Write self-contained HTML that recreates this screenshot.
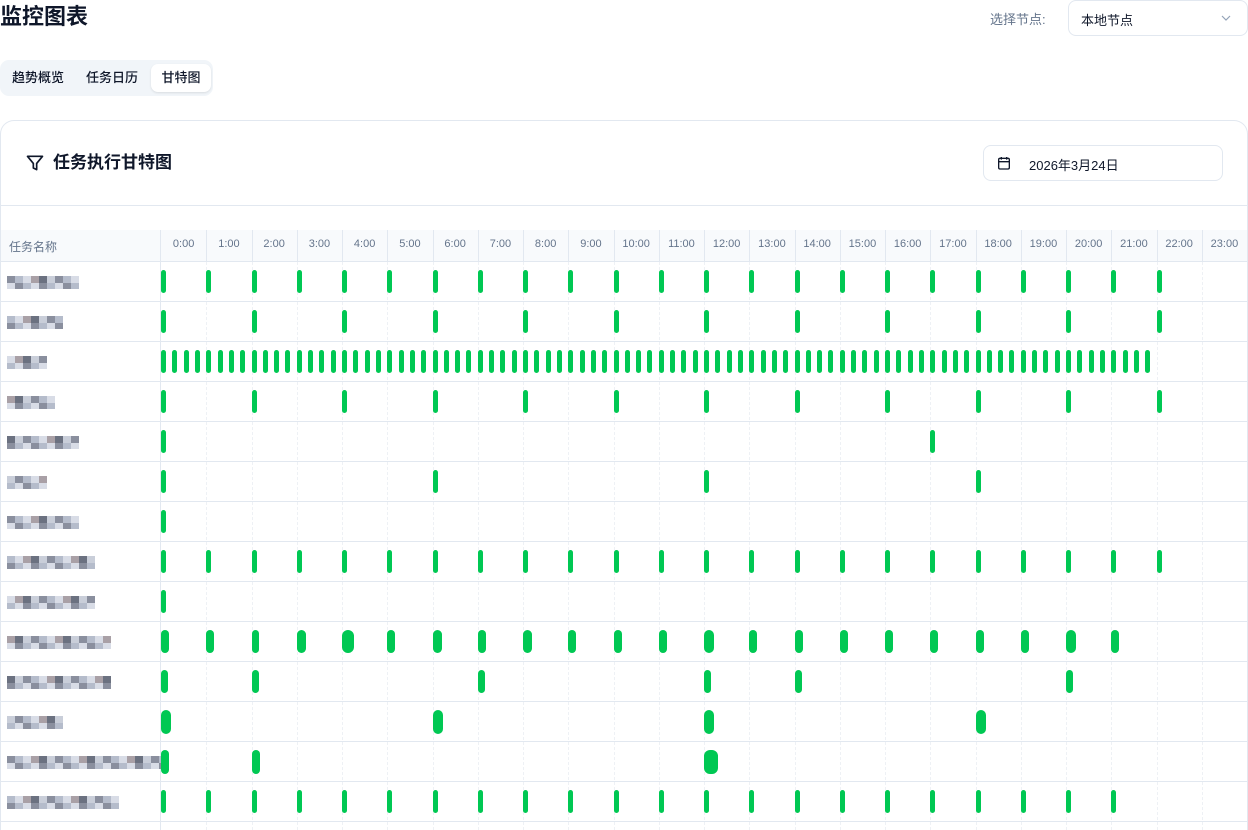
<!DOCTYPE html>
<html style="height:830px;overflow:hidden"><head><meta charset="utf-8">
<style>
*{box-sizing:border-box;margin:0;padding:0}
body{width:1248px;height:830px;overflow:hidden;background:#fff;font-family:"Liberation Sans","Noto Sans CJK SC",sans-serif;color:#0f172a;position:relative}
.abs{position:absolute}
h1{position:absolute;left:0;top:2px;font-size:22px;font-weight:700;line-height:30px}
.lbl{left:990px;top:9px;font-size:13px;color:#64748b}
.sel{left:1068px;top:0;width:180px;height:36px;border:1px solid #e2e8f0;border-radius:8px;font-size:13px;padding:9px 12px}
.tabs{left:0;top:60px;width:213px;height:36px;background:#f1f5f9;border-radius:9px}
.tab{position:absolute;top:4px;height:28px;line-height:28px;font-size:13px;color:#0f172a;font-weight:500}
.tab.on{background:#fff;border-radius:7px;box-shadow:0 1px 2px rgba(0,0,0,.1)}
.card{left:0;top:120px;width:1248px;height:710px;border:1px solid #e2e8f0;border-bottom:none;border-radius:14px 14px 0 0}
.date{left:983px;top:145px;width:240px;height:36px;border:1px solid #e2e8f0;border-radius:8px;font-size:13px}
</style></head><body>
<h1>监控图表</h1>
<div class="abs lbl">选择节点:</div>
<div class="abs sel">本地节点<svg class="abs" style="left:152px;top:13px" width="10" height="8" viewBox="0 0 10 8"><path d="M1 2l4 4 4-4" fill="none" stroke="#94a3b8" stroke-width="1.2"/></svg></div>
<div class="abs tabs">
<div class="tab" style="left:12px">趋势概览</div>
<div class="tab" style="left:86px">任务日历</div>
<div class="tab on" style="left:151px;width:60px;text-align:center">甘特图</div>
</div>
<div class="abs card"></div>
<svg class="abs" style="left:25px;top:153px" width="20" height="20" viewBox="0 0 24 24"><path d="M3 4h18l-7 8.5V20l-4-2v-5.5z" fill="none" stroke="#0f172a" stroke-width="2" stroke-linejoin="round"/></svg>
<div class="abs" style="left:53px;top:151px;font-size:17px;font-weight:700;line-height:24px">任务执行甘特图</div>
<div class="abs date"><svg class="abs" style="left:12px;top:9px" width="16" height="16" viewBox="0 0 24 24"><rect x="4" y="5" width="16" height="16" rx="2" fill="none" stroke="#0f172a" stroke-width="2"/><path d="M4 10h16M8 3v4M16 3v4" stroke="#0f172a" stroke-width="2"/></svg><span class="abs" style="left:45px;top:9px">2026年3月24日</span></div>
<div class="abs" style="left:1px;top:205px;width:1246px;height:1px;background:#e2e8f0"></div>
<div id="g"></div>
<script>
var g=document.getElementById('g'),h='';
var L=161,W=45.25;
h+='<div class="abs" style="left:1px;top:230px;width:1246px;height:32px;background:#f8fafc;border-bottom:1px solid #e2e8f0"></div>';
h+='<div class="abs" style="left:9px;top:238px;font-size:12px;color:#64748b">任务名称</div>';
h+='<div class="abs" style="left:160px;top:230px;width:1px;height:600px;background:#e2e8f0"></div>';
for(var i=0;i<24;i++){var x=L+i*W;
 h+='<div class="abs" style="left:'+x.toFixed(1)+'px;top:238px;width:'+W+'px;text-align:center;font-size:11px;color:#64748b">'+i+':00</div>';
 if(i>0){h+='<div class="abs" style="left:'+x.toFixed(1)+'px;top:230px;width:1px;height:32px;background:#e2e8f0"></div>';
 h+='<div class="abs" style="left:'+x.toFixed(1)+'px;top:262px;width:0;height:568px;border-left:1px dashed #eef1f5"></div>';}
}
function rng(a,b,s){var r=[];for(var i=a;i<=b;i+=s)r.push(i);return r;}
var rows=[
 [rng(0,22,1),5],[rng(0,22,2),5],[rng(0,21.75,0.25),5],[rng(0,22,2),5],[[0,17],5],[[0,6,12,18],5],[[0],5],
 [rng(0,22,1),5],[[0],5],[rng(0,21,1),8],[[0,2,7,12,14,20],7],[[0,6,12,18],10],[[0,2,12],8],[rng(0,21,1),5]
];
var wide={9:{4:12,6:9,3:9,2:7,8:9,12:10,20:10}};
var nws=[72,55,40,48,65,40,72,82,85,100,100,50,155,105];
for(var r=0;r<14;r++){var y=262+r*40;
 h+='<div class="abs" style="left:1px;top:'+(y+39)+'px;width:1246px;height:1px;background:#e2e8f0"></div>';
  var nw=nws[r];
  for(var k=0;k<nw;k+=8){var c=['#8a8f9e','#b5bccb','#d8dce6','#a9a0a6','#6b7180','#c9ced9'][(k/8+r)%6];
   h+='<div class="abs" style="left:'+(7+k)+'px;top:'+(y+14)+'px;width:8px;height:7px;background:'+c+'"></div>';
   h+='<div class="abs" style="left:'+(7+k)+'px;top:'+(y+21)+'px;width:8px;height:6px;background:'+['#d8dce6','#8a8f9e','#b5bccb'][(k/8+r)%3]+'"></div>';}
  var hs=rows[r][0];
  for(var j=0;j<hs.length;j++){var hr=hs[j],w=rows[r][1];
   if(wide[r]&&wide[r][hr])w=wide[r][hr];
   if(r==12&&hr==12)w=14;
   var hh=(r==11||r==12)?24:23;
   h+='<div class="abs" style="left:'+(L+hr*W).toFixed(1)+'px;top:'+(y+8)+'px;width:'+w+'px;height:'+hh+'px;border-radius:'+Math.min(w/2,6)+'px;background:#00c853"></div>';}
}
g.innerHTML=h;
</script>
</body></html>
